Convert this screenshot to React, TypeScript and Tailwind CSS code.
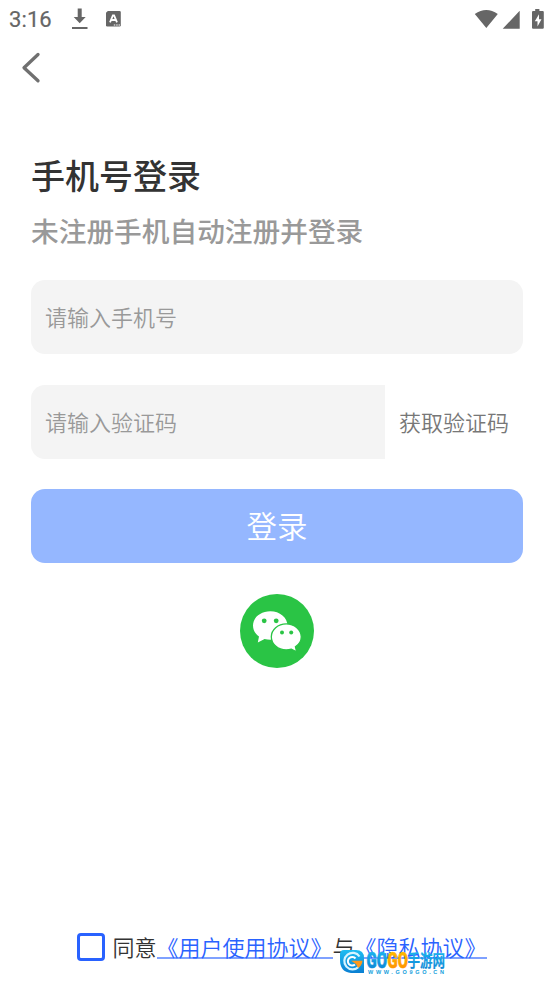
import React from "react";

function StatusBar() {
  return (
    <header className="flex h-[37px] items-center text-[#666]">
      <span className="ml-[9px] mt-[2px] w-[60px] font-[Roboto] text-[22px] leading-none tracking-[0.1px] [-webkit-text-stroke:0.2px_#666]">3:16</span>
      <svg className="ml-[2px] mt-[1px]" width="18" height="22" viewBox="0 0 18 22" fill="#666">
        <path d="M6.700 0.500h4v8.500h4L8.700 15.200 2.700 9h4zM1 19h15.500v2H1z" />
      </svg>
      <svg className="ml-[16px]" width="18" height="18" viewBox="0 0 18 18">
        <path d="M2.800 1h11.700q1.300 0 1.300 1.300v13q0 1.300-1.300 1.300H2.300Q1 16.600 1 15.300V2.800z" fill="#666" />
        <path d="M5 12.300 7.900 5.500h1.200l2.900 6.800M6.300 10h4.500" fill="none" stroke="#fff" strokeWidth="1.800" />
        <path d="M8.800 15h1.500M11.200 15h1.500M13.500 15H15" stroke="#fff" strokeWidth="1.200" />
      </svg>
      <svg className="ml-auto" width="80" height="24" viewBox="0 0 80 24" fill="#666">
        <path d="M.8 7.100Q12.300-1.200 23.800 7.100L12.300 21zM45.700 3.800V21.800H28.700z" />
        <path d="M61.200 2h4.200v1.900h3.300q1.100 0 1.100 1.100v15.700q0 1.100-1.100 1.100H59.100q-1.100 0-1.100-1.100V5q0-1.100 1.100-1.100h2.100z" />
        <path d="M65 7.200 60.800 14.200h2.700v5.200l4-7.200h-2.500z" fill="#fff" />
      </svg>
    </header>
  );
}

function WeChatButton() {
  return (
    <button className="mx-auto mt-[31px] block size-[74px]" aria-label="WeChat">
      <svg width="74" height="74" viewBox="0 0 74 74">
        <circle cx="37" cy="37" r="37" fill="#2ac445" />
        <path d="M30.300 17.300c-9.800 0-17.300 6.300-17.300 14.300 0 4.700 2.300 8.300 6 10.900l-1.200 6 6.800-3.600q2.700.8 5.700.8c9.600 0 17.200-6.100 17.200-14.100s-7.700-14.300-17.200-14.300z" fill="#fff" />
        <path d="M46.200 29.900c-8.300 0-14.900 5.700-14.900 12.900s6.600 13.200 14.900 13.200q2.800 0 5.200-.8l5.300 2.700-1.300-5c3.500-2.300 5.900-5.900 5.900-10.100 0-7.200-6.800-12.900-15.100-12.900z" fill="#fff" stroke="#2ac445" strokeWidth="1.300" />
        <g fill="#2ac445">
          <circle cx="24.200" cy="26.800" r="2.400" />
          <circle cx="36.200" cy="26.800" r="2.400" />
          <circle cx="42" cy="38.600" r="2" />
          <circle cx="51.200" cy="38.600" r="2" />
        </g>
      </svg>
    </button>
  );
}

function Watermark() {
  return (
    <svg className="absolute left-[338px] top-[948px]" width="114" height="30" viewBox="0 0 114 30">
      <defs>
        <linearGradient id="sky" x2="0" y2="1">
          <stop stopColor="#1fbdf2" />
          <stop offset="1" stopColor="#0a7fd2" />
        </linearGradient>
        <linearGradient id="sun" x2="0" y2="1">
          <stop stopColor="#ffc400" />
          <stop offset="1" stopColor="#ff8a00" />
        </linearGradient>
      </defs>
      <path d="M6 2h12q8 0 8 8v15H13Q2 24 2 12V6q0-4 4-4z" fill="url(#sky)" />
      <path d="M21.500 8.500a8.300 8.300 0 1 0-1 10.500" fill="none" stroke="#d7f4ff" strokeWidth="2.200" />
      <path d="M17.500 10.500a4.300 4.300 0 1 0-.5 6" fill="none" stroke="#fff" strokeWidth="2" />
      <path d="M13 12.700h11.500q-.5 4.800-4.500 7.300l-2-4z" fill="#ff981c" />
      <g fontFamily="Roboto, sans-serif" fontWeight="900" fontSize="22" strokeWidth=".6" strokeLinejoin="round">
        <text x="28.500" y="19.500" textLength="20.500" lengthAdjust="spacingAndGlyphs" fill="url(#sky)" stroke="url(#sky)">GO</text>
        <text x="49.500" y="19.500" textLength="20.500" lengthAdjust="spacingAndGlyphs" fill="url(#sun)" stroke="url(#sun)">GO</text>
      </g>
      <text x="69.500" y="19" textLength="37.500" lengthAdjust="spacingAndGlyphs" fontFamily="'Noto Sans CJK SC', sans-serif" fontWeight="700" fontSize="16.500" fill="url(#sky)" stroke="url(#sky)" strokeWidth=".2">手游网</text>
      <text x="30" y="25.500" textLength="76" fontFamily="'Liberation Sans', sans-serif" fontWeight="700" fontSize="5.500" fill="#149edc">WWW.GO9GO.CN</text>
    </svg>
  );
}

export default function App() {
  return (
    <main className="relative flex h-[984px] w-[554px] flex-col overflow-hidden bg-white font-['Noto_Sans_CJK_SC',sans-serif]">
      <StatusBar />
      <nav className="h-[63px] pl-[20px] pt-[14px]">
        <svg width="22" height="34" viewBox="0 0 22 34" fill="none" stroke="#707070" strokeWidth="3.300" strokeLinecap="round" strokeLinejoin="round">
          <path d="M18 3.500 4 16.700 18 29.800" />
        </svg>
      </nav>
      <section className="px-[31px] pt-[50px]">
        <h1 className="h-[50px] text-[34px] font-medium leading-[50px] text-[#333]">手机号登录</h1>
        <p className="mt-[10px] h-[40px] text-[27.700px] font-medium leading-[40px] text-[#999]">未注册手机自动注册并登录</p>
        <div className="mt-[30px] flex h-[74px] items-center rounded-[14px] bg-[#f4f4f4] pb-[2px] pl-[14px] text-[22px] font-[350] text-[#999]">请输入手机号</div>
        <div className="mt-[31px] flex h-[74px] text-[22px] font-[350]">
          <div className="flex w-[354px] items-center rounded-l-[14px] bg-[#f4f4f4] pb-[2px] pl-[14px] text-[#999]">请输入验证码</div>
          <button className="flex flex-1 items-center whitespace-nowrap pb-[2px] pl-[14px] text-[#777]">获取验证码</button>
        </div>
        <button className="mt-[30px] flex h-[74px] w-full items-center justify-center rounded-[14px] bg-[#95b7ff] text-[30.500px] font-[350] text-white">登录</button>
        <WeChatButton />
      </section>
      <footer className="mb-[20px] mt-auto flex h-[34px] items-center pl-[77px] text-[22px] font-[350] leading-[32px] text-[#333]">
        <span className="mr-[7.500px] size-[28px] rounded-[4px] border-[3px] border-[#2962ff]" />
        <span className="pb-[2px]">同意</span>
        <a className="relative pb-[2px] text-[#2962ff] after:absolute after:inset-x-0 after:top-[27px] after:h-[2px] after:bg-[#2962ff]/60">《用户使用协议》</a>
        <span className="pb-[2px]">与</span>
        <a className="relative pb-[2px] text-[#2962ff] after:absolute after:inset-x-0 after:top-[27px] after:h-[2px] after:bg-[#2962ff]/60">《隐私协议》</a>
      </footer>
      <Watermark />
    </main>
  );
}
